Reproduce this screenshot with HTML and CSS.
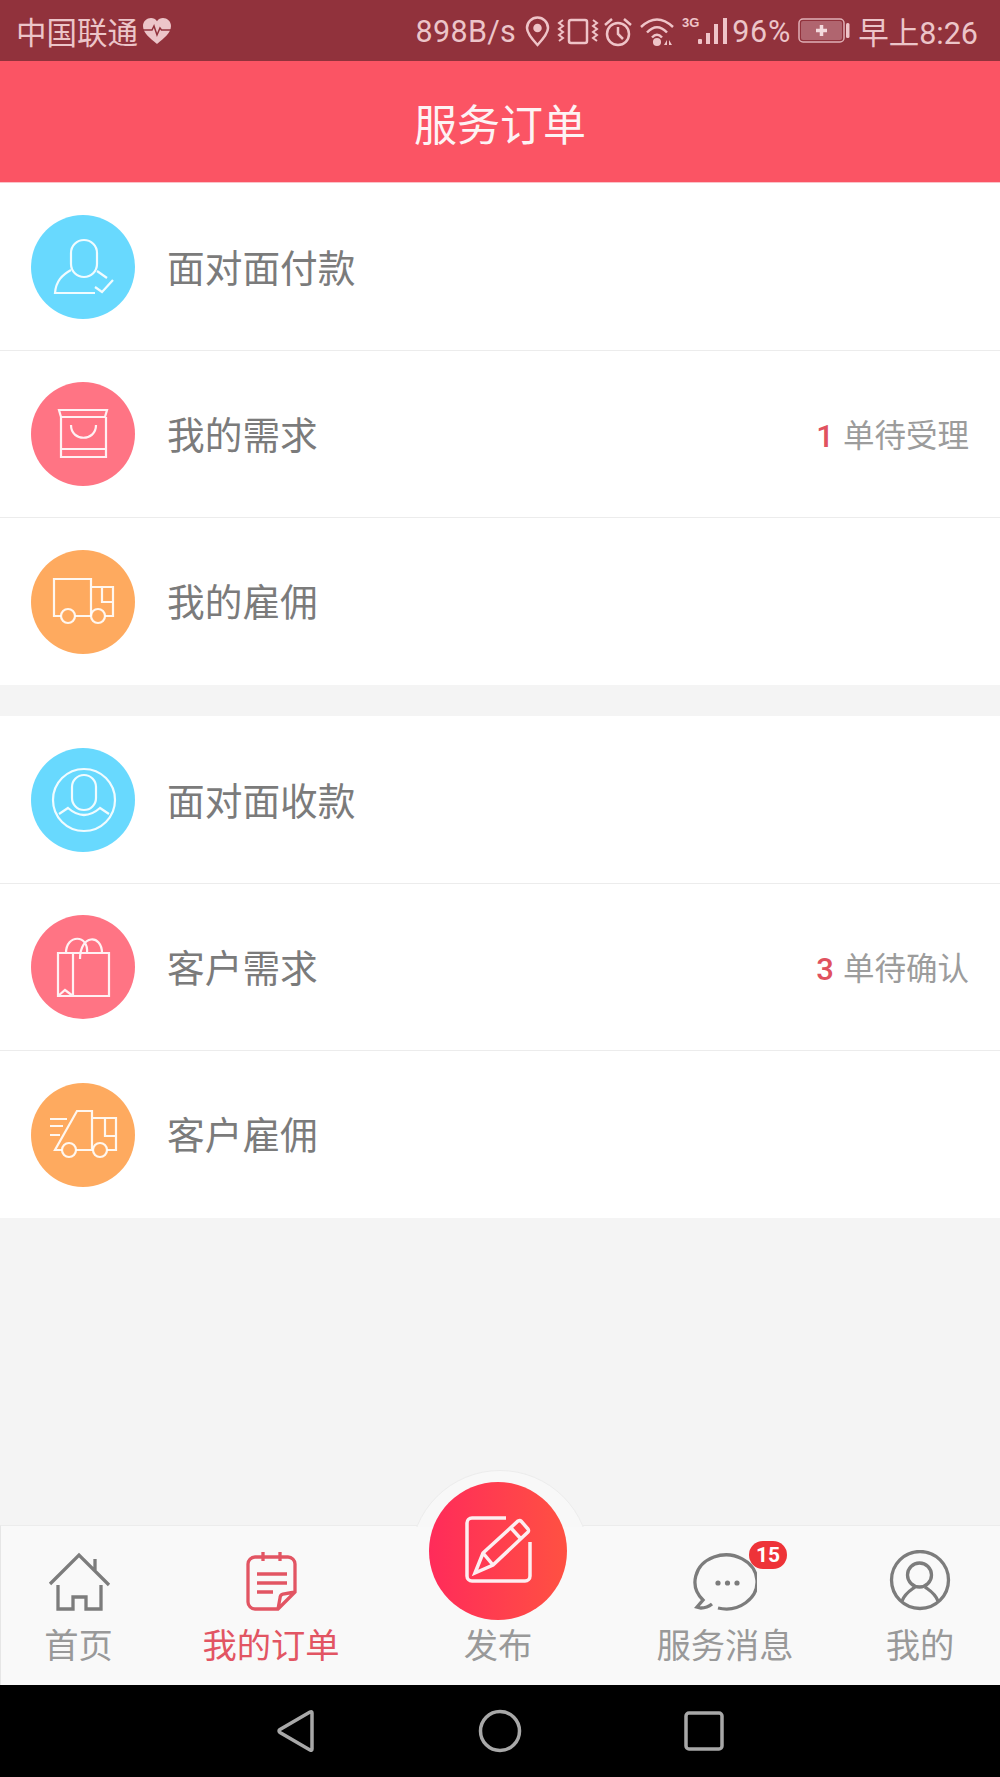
FILE: index.html
```html
<!DOCTYPE html>
<html lang="zh">
<head>
    <meta charset="utf-8">
    <title>服务订单</title>
    <link rel="stylesheet" href="styles.css">
</head>
<body>
<div class="phone">
    <div class="status">
        <div class="status-left">
            <span class="carrier">中国联通</span>
            <svg class="heart" viewBox="0 0 30 28">
                <path class="heart-fill" d="M15 27 C8 21 1 16 1 9 C1 4 5 1 9 1 C11.500 1 13.600 2.200 15 4.200 C16.400 2.200 18.500 1 21 1 C25 1 29 4 29 9 C29 16 22 21 15 27Z"/>
                <path class="heart-line" d="M1 13 H10 L12 9 L15 18 L18 11 L19.500 13 H29"/>
            </svg>
        </div>
        <div class="status-right">
            <span class="speed">898B/s</span>
            <svg class="status-icons" viewBox="0 0 204 36">
                <path d="M12.500 31 C6 24 2 19 2 14 a10.500 10.500 0 0 1 21 0 C23 19 19 24 12.500 31Z"/>
                <circle class="solid" cx="12.500" cy="14" r="3"/>
                <rect x="44" y="6" width="18" height="23" rx="2"/>
                <path class="thin" d="M38 6 L34 9 L38 12 L34 15 L38 18 L34 21 L38 24 L34 27 M68 6 L72 9 L68 12 L72 15 L68 18 L72 21 L68 24 L72 27"/>
                <circle cx="93" cy="20" r="11"/>
                <path d="M93 13 V20 L98 25 M80 11 L87 5 M106 11 L99 5"/>
                <path d="M116 13 Q132 -2 148 13 M122 18.500 Q132 8 142 18.500 M127 23.500 Q132 18 137 23.500"/>
                <circle class="solid" cx="132" cy="28" r="2.800"/>
                <path class="solid no-line" d="M139 31 L142 26 V31Z M144 26 L147 31 H144Z"/>
                <text class="three-g" x="157" y="13">3G</text>
                <rect class="solid no-line" x="173" y="25" width="4" height="5" rx="1"/>
                <rect class="solid no-line" x="181" y="19" width="4" height="11"/>
                <rect class="solid no-line" x="189" y="10" width="4" height="20"/>
                <rect class="solid no-line" x="198" y="4" width="4" height="26"/>
            </svg>
            <span class="percent">96%</span>
            <svg class="battery" viewBox="0 0 52 26">
                <rect class="batt-body" x="1" y="1" width="45" height="23" rx="4"/>
                <rect class="batt-inner" x="3" y="3" width="41" height="19" rx="2"/>
                <rect class="batt-solid" x="48" y="5" width="3.500" height="15" rx="1.500"/>
                <path class="batt-plus" d="M23.500 7 V18 M18 12.500 H29"/>
            </svg>
            <span class="clock">早上8:26</span>
        </div>
    </div>

    <header class="title-bar">服务订单</header>

    <main class="content">
        <section class="group">
            <div class="row">
                <div class="badge-circle blue">
                    <svg class="line-icon" viewBox="-1 0 104 104">
                        <rect x="39" y="25" width="26" height="37" rx="13"/>
                        <path d="M39 55 C30 60 24 66 23 78 H63 M65 56 L75 63 M63 72 L70 77 L81 65"/>
                    </svg>
                </div>
                <span class="row-label">面对面付款</span>
            </div>
            <div class="row">
                <div class="badge-circle pink">
                    <svg class="line-icon" viewBox="-1 0 104 104">
                        <path d="M27 28 H75 L73 35 H29 Z M29 35 V75 H74 V35 M29 67 H74 M39 43 C39 60 64 60 64 43"/>
                    </svg>
                </div>
                <span class="row-label">我的需求</span>
                <span class="row-note"><b>1</b>单待受理</span>
            </div>
            <div class="row last">
                <div class="badge-circle orange">
                    <svg class="line-icon" viewBox="-1 0 104 104">
                        <path d="M29 66 H22 V29 H59 V66 M43 66 H59 M59 37 H81 V66 H73 M70 37 V52 H81"/>
                        <circle cx="36" cy="66" r="7"/>
                        <circle cx="66" cy="66" r="7"/>
                    </svg>
                </div>
                <span class="row-label">我的雇佣</span>
            </div>
        </section>

        <section class="group">
            <div class="row">
                <div class="badge-circle blue">
                    <svg class="line-icon" viewBox="-1 0 104 104">
                        <circle cx="52" cy="52" r="31"/>
                        <rect x="40" y="27" width="24" height="35" rx="12"/>
                        <path d="M27 66 L36 60 Q52 74 68 60 L77 66"/>
                    </svg>
                </div>
                <span class="row-label">面对面收款</span>
            </div>
            <div class="row">
                <div class="badge-circle pink">
                    <svg class="line-icon" viewBox="-1 0 104 104">
                        <path d="M26 38 H77 V81 H26 Z M41 38 V81 M26 81 L33 75 L41 81 M34 38 C34 19 57 19 55 38 M48 44 C48 19 70 19 70 38"/>
                    </svg>
                </div>
                <span class="row-label">客户需求</span>
                <span class="row-note"><b>3</b>单待确认</span>
            </div>
            <div class="row last">
                <div class="badge-circle orange">
                    <svg class="line-icon" viewBox="-1 0 104 104">
                        <path d="M30 67 H23 L45 28 H60 V67 M44 67 H61 M60 35 H84 V67 H75 M73 35 V53 H84 M18 36 H35 M18 43 H31 M18 52 H28"/>
                        <circle cx="37" cy="67" r="7"/>
                        <circle cx="68" cy="67" r="7"/>
                    </svg>
                </div>
                <span class="row-label">客户雇佣</span>
            </div>
        </section>
    </main>

    <nav class="tabbar">
        <div class="bump"><div class="bump-circle"></div></div>

        <div class="tab">
            <svg class="tab-icon" viewBox="0 0 64 64">
                <path d="M3 34 L32 5 L62 35 M11 35 V59 H26 V47 H39 V59 H54 V35 M48 9 V20"/>
            </svg>
            <span>首页</span>
        </div>
        <div class="tab active">
            <svg class="tab-icon" viewBox="0 0 64 64">
                <path d="M16 7 H49 a7 7 0 0 1 7 7 V42 L39 59 H16 a7 7 0 0 1 -7 -7 V14 a7 7 0 0 1 7 -7 Z M24 2 V11 M41 2 V11 M18 24 H48 M18 33 H48 M18 42 H34 M56 42 L44 44 Q41 45 41 48 L39 59"/>
            </svg>
            <span>我的订单</span>
        </div>
        <div class="tab">
            <div class="publish">
                <svg class="publish-icon" viewBox="0 0 138 138">
                    <path d="M77 36 H43 a5 5 0 0 0 -5 5 V94 a5 5 0 0 0 5 5 H96 a5 5 0 0 0 5 -5 V60"/>
                    <path d="M46 91 L54 71 L89 39 Q91 38 92 39 L99 47 Q100 49 99 50 L64 83 Z M54 71 L64 83 M82 46 L92 57"/>
                </svg>
            </div>
            <span>发布</span>
        </div>
        <div class="tab">
            <svg class="tab-icon" viewBox="0 0 64 64">
                <path d="M25 58 A31 27 0 1 0 10 50 L4 57 L8 58 Q14 58 19 54"/>
                <circle class="dot" cx="25" cy="33" r="2.600"/>
                <circle class="dot" cx="34.500" cy="33" r="2.600"/>
                <circle class="dot" cx="44" cy="33" r="2.600"/>
            </svg>
            <span>服务消息</span>
            <span class="count">15</span>
        </div>
        <div class="tab">
            <svg class="tab-icon" viewBox="0 0 64 64">
                <circle cx="32" cy="30" r="28.500"/>
                <circle cx="31.500" cy="25" r="12"/>
                <path d="M14 51 C17 43 23 40 27 37 M50 51 C47 43 41 40 37 37"/>
            </svg>
            <span>我的</span>
        </div>
    </nav>

    <div class="navbar">
        <svg class="nav-icon" viewBox="0 0 44 44"><path d="M38 4 V40 Q38 42 36 41 L6 23.500 Q4 22 6 20.500 L36 3 Q38 2 38 4 Z"/></svg>
        <svg class="nav-icon" viewBox="0 0 44 44"><circle cx="22" cy="22" r="19.500"/></svg>
        <svg class="nav-icon" viewBox="0 0 44 44"><rect x="4" y="4" width="36" height="36" rx="3"/></svg>
    </div>
</div>
</body>
</html>
```

FILE: styles.css
```css
* {
    box-sizing: border-box;
}
body {
    margin: 0;
    padding: 0;
    font-family: Roboto, "Noto Sans CJK SC", sans-serif;
}
.phone {
    width: 1000px;
    height: 1777px;
    display: flex;
    flex-direction: column;
    background: #f4f4f4;
    overflow: hidden;
}

/* status bar */
.status {
    height: 61px;
    background: #91323c;
    color: #ecc5c9;
    display: flex;
    justify-content: space-between;
    align-items: center;
    padding: 0 22px 0 16px;
    font-size: 30.500px;
}
.status-left, .status-right {
    display: flex;
    align-items: center;
}
.carrier {
    font-size: 30.500px;
}
.heart {
    width: 30px;
    height: 28px;
    margin-left: 4px;
}
.heart-fill {
    fill: #ecc5c9;
}
.heart-line {
    fill: none;
    stroke: #91323c;
    stroke-width: 1.500;
}
.speed {
    letter-spacing: 0.300px;
    padding-top: 2px;
}
.status-icons {
    width: 204px;
    height: 36px;
    margin-left: 9px;
    margin-top: 2px;
    fill: none;
    stroke: #efc4c8;
    stroke-width: 2.500;
}
.status-icons .thin {
    stroke-width: 2;
}
.status-icons .solid {
    fill: #efc4c8;
}
.status-icons .no-line {
    stroke: none;
}
.three-g {
    font-family: "Liberation Sans", sans-serif;
    font-size: 13px;
    font-weight: bold;
    fill: #efc4c8;
    stroke: none;
}
.percent {
    margin-left: 3px;
    letter-spacing: 0.800px;
    padding-top: 2px;
}
.battery {
    width: 52px;
    height: 26px;
    margin-left: 7px;
}
.batt-body {
    fill: none;
    stroke: #e0b0b6;
    stroke-width: 1.500;
}
.batt-inner {
    fill: #b0656f;
}
.batt-solid {
    fill: #efc4c8;
}
.batt-plus {
    fill: none;
    stroke: #f3dadd;
    stroke-width: 3.500;
}
.clock {
    margin-left: 8px;
}

/* title */
.title-bar {
    height: 122px;
    background: #fb5464;
    border-bottom: 1px solid #fbc3c9;
    color: #fdf3f4;
    font-size: 43px;
    display: flex;
    align-items: center;
    justify-content: center;
}

/* list */
.content {
    flex: 1;
    display: flex;
    flex-direction: column;
    gap: 31px;
}
.group {
    background: #fff;
    padding-top: 1px;
}
.row {
    height: 167px;
    display: flex;
    align-items: center;
    padding: 0 31px 0 31px;
    border-bottom: 1px solid #ececec;
}
.row.last {
    border-bottom: none;
}
.badge-circle {
    width: 104px;
    height: 104px;
    border-radius: 50%;
    flex: none;
}
.badge-circle svg {
    display: block;
}
.blue {
    background: #68d9fe;
}
.pink {
    background: #ff7484;
}
.orange {
    background: #feaa5f;
}
.line-icon {
    width: 104px;
    height: 104px;
    fill: none;
    stroke: #fff;
    stroke-opacity: 0.9;
    stroke-width: 2.200;
}
.row-label {
    margin-left: 32px;
    margin-bottom: 4px;
    font-size: 37.700px;
    color: #7b7b7b;
    flex: 1;
}
.row-note {
    font-size: 31.500px;
    color: #9c9c9c;
    margin-bottom: 2px;
}
.row-note b {
    font-weight: 500;
    font-size: 31px;
    color: #e0525f;
    margin-right: 9px;
}

/* bottom tabs */
.tabbar {
    position: relative;
    height: 160px;
    background: #f9f9f9;
    border-top: 1px solid #ececec;
    border-left: 1px solid #e6e6e6;
    display: grid;
    grid-template-columns: 155px 230px 224px 230px 160px;
}
.bump {
    position: absolute;
    left: 409px;
    top: -56px;
    width: 180px;
    height: 57px;
    overflow: hidden;
}
.bump-circle {
    width: 180px;
    height: 180px;
    border-radius: 50%;
    background: #f8f8f8;
    border: 1px solid #ececec;
}
.tab {
    position: relative;
    display: flex;
    flex-direction: column;
    align-items: center;
    justify-content: flex-end;
    padding-bottom: 19px;
    font-size: 34.300px;
    line-height: 40px;
    color: #999;
}
.tab.active {
    color: #e25563;
}
.tab-icon {
    width: 64px;
    height: 64px;
    margin-bottom: 12px;
    fill: none;
    stroke: #7c7c7c;
    stroke-width: 3.300;
}
.tab.active .tab-icon {
    stroke: #e25563;
}
.tab-icon .dot {
    fill: #7c7c7c;
    stroke: none;
}
.publish {
    position: absolute;
    left: 43px;
    top: -44px;
    width: 138px;
    height: 138px;
    border-radius: 50%;
    background: linear-gradient(to right, #ff2b5a, #ff5142);
}
.publish-icon {
    display: block;
    width: 138px;
    height: 138px;
    fill: none;
    stroke: #fdeef0;
    stroke-width: 3.500;
}
.count {
    position: absolute;
    left: 139px;
    top: 15px;
    width: 38px;
    height: 28px;
    border-radius: 14px;
    background: #ee3338;
    color: #fff;
    font-size: 21px;
    font-weight: 700;
    line-height: 28px;
    text-align: center;
}

/* android keys */
.navbar {
    height: 92px;
    background: #000;
    display: flex;
    align-items: center;
    justify-content: center;
    gap: 160px;
}
.nav-icon {
    width: 44px;
    height: 44px;
    fill: none;
    stroke: #a8a8a8;
    stroke-width: 3.500;
}
```
